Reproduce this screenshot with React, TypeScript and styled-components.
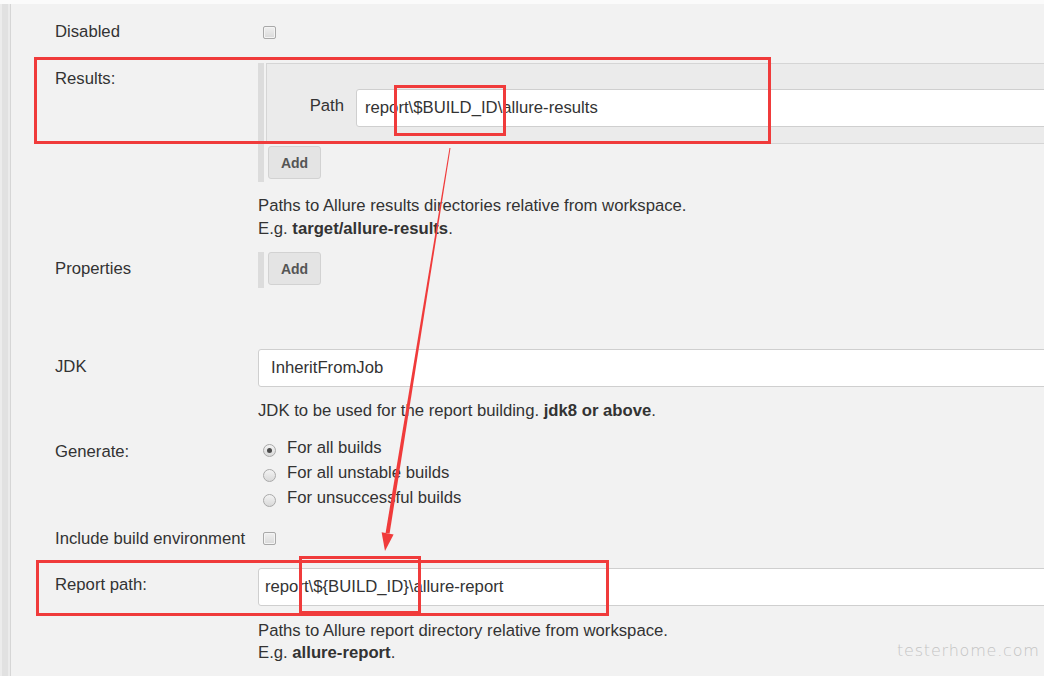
import React from "react";
import styled, { createGlobalStyle } from "styled-components";

const Global = createGlobalStyle`
  html, body { margin: 0; padding: 0; background: #f2f2f2; overflow: hidden; }
  body { font-family: "Liberation Sans", Arial, sans-serif; color: #333; }
`;

const Page = styled.div`
  position: relative;
  width: 1044px;
  height: 676px;
  overflow: hidden;
  background: #f2f2f2;
`;

const TopStrip = styled.div`
  height: 4px;
  background: #fbfbfb;
`;

const Body = styled.div`
  display: flex;
  width: 1090px;
  height: 672px;
`;

const Rail = styled.div`
  width: 11px;
  flex: none;
  background: linear-gradient(
    to right,
    #ececec 0, #ececec 2px,
    #e1e1e1 2px, #e1e1e1 8px,
    #ebebeb 8px, #ebebeb 10px,
    #d6d6d6 10px, #d6d6d6 11px
  );
`;

const Form = styled.div`
  flex: 1;
  display: flex;
  flex-direction: column;
  padding-left: 44px;
  font-size: 16.7px;
`;

const Row = styled.div<{ $mt: number }>`
  display: grid;
  grid-template-columns: 203px 1fr;
  align-items: start;
  margin-top: ${(p) => p.$mt}px;
`;

const Label = styled.div<{ $pt?: number }>`
  line-height: 22px;
  padding-top: ${(p) => p.$pt ?? 0}px;
  color: #333;
  white-space: nowrap;
`;

const Value = styled.div`
  display: flex;
  flex-direction: column;
  align-items: flex-start;
  min-width: 0;
`;

const CheckCell = styled.div`
  height: 22px;
  display: flex;
  align-items: center;
  padding-left: 5px;
`;

const Checkbox = styled.span`
  display: inline-block;
  box-sizing: border-box;
  width: 13px;
  height: 13px;
  border: 1px solid #a9a9a9;
  border-radius: 2px;
  background: linear-gradient(#f0f0f0, #dadada);
  box-shadow: inset 0 0 0 1px #f4f4f4;
`;

const Repeat = styled.div`
  align-self: stretch;
  border-left: 6px solid #dcdcdc;
  padding: 0 0 3px 2px;
  display: flex;
  flex-direction: column;
  align-items: flex-start;
`;

const Chunk = styled.div`
  align-self: stretch;
  box-sizing: border-box;
  height: 81px;
  background: #ebebeb;
  border: 1px solid #d5d5d5;
  border-right: none;
  padding-top: 25px;
  display: flex;
  align-items: flex-start;
  gap: 12px;
`;

const ChunkLabel = styled.div`
  width: 77px;
  text-align: right;
  line-height: 38px;
  margin-top: -2px;
`;

const Input = styled.div<{ $pl: number }>`
  flex: 1;
  align-self: stretch;
  box-sizing: border-box;
  height: 38px;
  background: #fff;
  border: 1px solid #cfcfcf;
  border-radius: 3px;
  padding-left: ${(p) => p.$pl}px;
  line-height: 36px;
  color: #333;
  white-space: nowrap;
`;

const InputBlock = styled(Input)`
  flex: none;
  width: 100%;
`;

const AddButton = styled.button<{ $mt: number }>`
  margin: ${(p) => p.$mt}px 0 0 2px;
  width: 53px;
  height: 33px;
  box-sizing: border-box;
  background: #e4e4e4;
  border: 1px solid #d2d2d2;
  border-radius: 3px;
  font-family: "Liberation Sans", Arial, sans-serif;
  font-weight: bold;
  font-size: 14px;
  color: #555;
  padding: 0;
`;

const Help = styled.div<{ $mt: number; $lh?: number }>`
  margin-top: ${(p) => p.$mt}px;
  line-height: ${(p) => p.$lh ?? 23}px;
  color: #333;
  white-space: nowrap;
  b { font-weight: bold; color: #333; }
`;

const RadioList = styled.div`
  display: flex;
  flex-direction: column;
  padding-top: 1px;
`;

const RadioItem = styled.div`
  height: 25px;
  display: flex;
  align-items: center;
  gap: 11px;
  padding-left: 5px;
`;

const Radio = styled.span<{ $on?: boolean }>`
  position: relative;
  display: inline-block;
  box-sizing: border-box;
  width: 13px;
  height: 13px;
  margin-top: 6px;
  border-radius: 50%;
  border: 1px solid #a9a9a9;
  background: linear-gradient(#f3f3f3, #d9d9d9);
  &::after {
    content: "";
    display: ${(p) => (p.$on ? "block" : "none")};
    position: absolute;
    left: 3px;
    top: 3px;
    width: 5px;
    height: 5px;
    border-radius: 50%;
    background: #4a4a4a;
  }
`;

const Overlay = styled.svg`
  position: absolute;
  left: 0;
  top: 0;
  pointer-events: none;
`;

const Watermark = styled.div`
  position: absolute;
  left: 897px;
  top: 641px;
  font-family: "DejaVu Sans", sans-serif;
  font-weight: 200;
  font-size: 16px;
  letter-spacing: 0.8px;
  color: #c4c4c4;
  white-space: nowrap;
`;

const RED = "#f03b3b";

export default function App() {
  return (
    <Page>
      <Global />
      <TopStrip />
      <Body>
        <Rail />
        <Form>
          <Row $mt={17}>
            <Label>Disabled</Label>
            <CheckCell>
              <Checkbox />
            </CheckCell>
          </Row>

          <Row $mt={20}>
            <Label $pt={5}>Results:</Label>
            <Value>
              <Repeat>
                <Chunk>
                  <ChunkLabel>Path</ChunkLabel>
                  <Input $pl={8}>{"report\\$BUILD_ID\\allure-results"}</Input>
                </Chunk>
                <AddButton $mt={2}>Add</AddButton>
              </Repeat>
              <Help $mt={12}>
                Paths to Allure results directories relative from workspace.
                <br />
                E.g. <b>target/allure-results</b>.
              </Help>
            </Value>
          </Row>

          <Row $mt={12}>
            <Label $pt={6}>Properties</Label>
            <Value>
              <Repeat>
                <AddButton $mt={0}>Add</AddButton>
              </Repeat>
            </Value>
          </Row>

          <Row $mt={61}>
            <Label $pt={7}>JDK</Label>
            <Value>
              <InputBlock $pl={12}>InheritFromJob</InputBlock>
              <Help $mt={12}>
                JDK to be used for the report building. <b>jdk8 or above</b>.
              </Help>
            </Value>
          </Row>

          <Row $mt={12}>
            <Label $pt={7}>Generate:</Label>
            <RadioList>
              <RadioItem>
                <Radio $on />
                <span>For all builds</span>
              </RadioItem>
              <RadioItem>
                <Radio />
                <span>For all unstable builds</span>
              </RadioItem>
              <RadioItem>
                <Radio />
                <span>For unsuccessful builds</span>
              </RadioItem>
            </RadioList>
          </Row>

          <Row $mt={17}>
            <Label $pt={1}>Include build environment</Label>
            <CheckCell>
              <Checkbox />
            </CheckCell>
          </Row>

          <Row $mt={18}>
            <Label $pt={6}>Report path:</Label>
            <Value>
              <InputBlock $pl={6}>{"report\\${BUILD_ID}\\allure-report"}</InputBlock>
              <Help $mt={14} $lh={22}>
                Paths to Allure report directory relative from workspace.
                <br />
                E.g. <b>allure-report</b>.
              </Help>
            </Value>
          </Row>
        </Form>
      </Body>

      <Watermark>testerhome.com</Watermark>

      <Overlay width="1044" height="676" viewBox="0 0 1044 676">
        <g fill="none" stroke={RED} strokeWidth="3">
          <rect x="35.5" y="58.5" width="734" height="84" />
          <rect x="395.5" y="86.5" width="109" height="48" />
          <rect x="37.5" y="561.5" width="570" height="53" />
          <rect x="300.5" y="557.5" width="119" height="55" />
        </g>
        <polygon
          fill={RED}
          points="449.5,148 450.5,148 389.6,533.5 385.6,533 "
        />
        <polygon fill={RED} points="385,551 393.6,534.4 381.6,532.2" />
      </Overlay>
    </Page>
  );
}
